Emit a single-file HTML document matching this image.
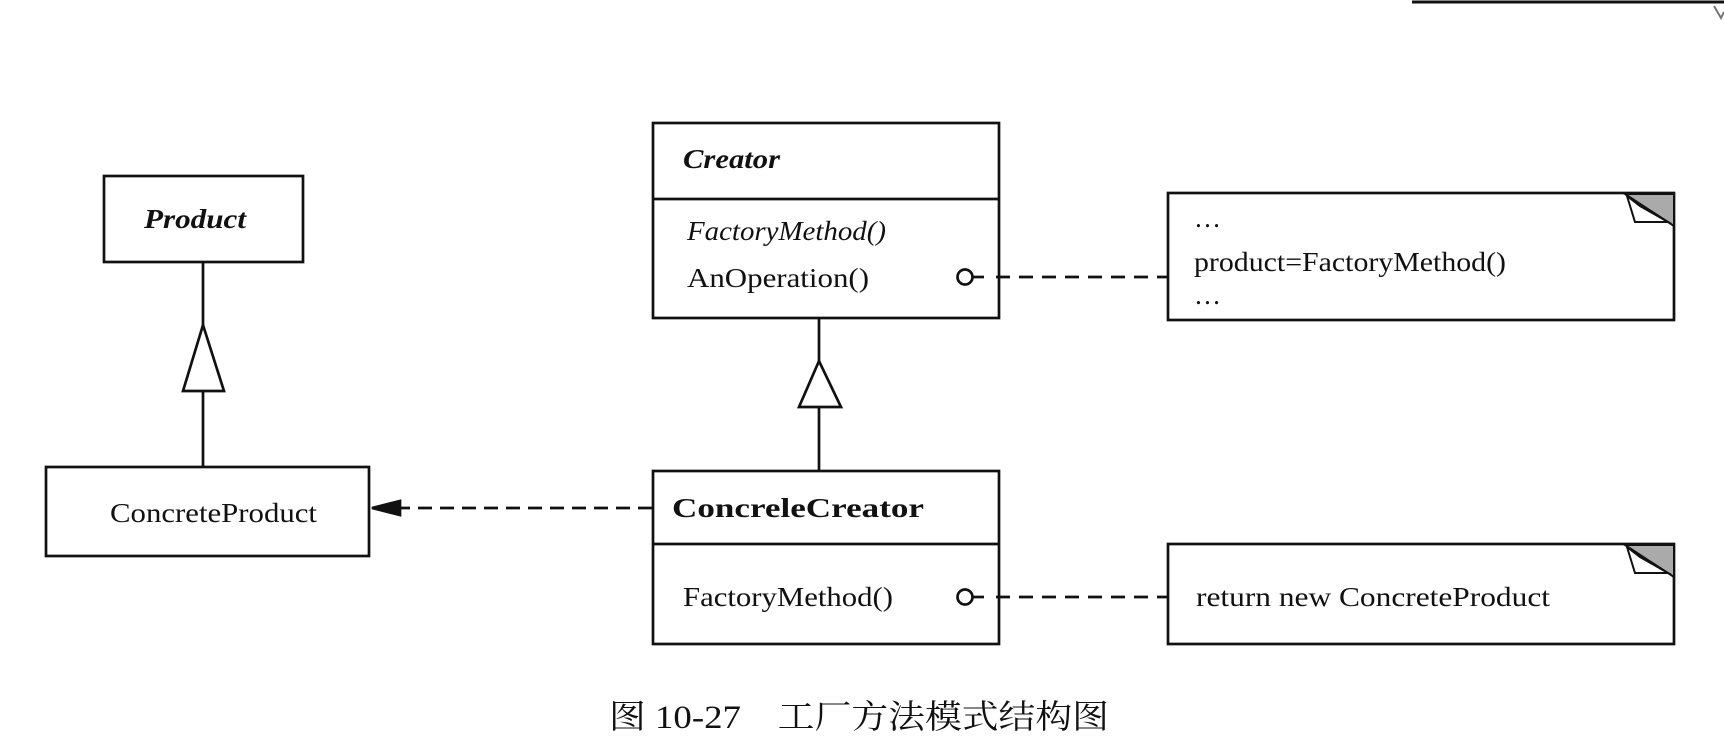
<!DOCTYPE html>
<html><head><meta charset="utf-8"><style>html,body{margin:0;padding:0;background:#fff;}svg{display:block}</style></head>
<body>
<svg width="1724" height="743" viewBox="0 0 1724 743" xmlns="http://www.w3.org/2000/svg" font-family="'Liberation Serif','Noto Serif CJK SC',serif" fill="#111">
<g stroke="#111" stroke-width="2.7" fill="none">
<line x1="1412" y1="2" x2="1724" y2="2" stroke-width="3"/>
<polyline points="1714,6 1721,18 1724,12" stroke="#777" stroke-width="2"/>
<rect x="104" y="176" width="199" height="86"/>
<line x1="203" y1="262" x2="203" y2="325"/>
<polygon points="203,325 183,391 224,391" fill="#fff"/>
<line x1="203" y1="391" x2="203" y2="467"/>
<rect x="46" y="467" width="323" height="89"/>
<line x1="652" y1="508" x2="395" y2="508" stroke-dasharray="14,8"/>
<polygon points="372,508 400,501 400,515" fill="#111"/>
<rect x="653" y="123" width="346" height="195"/>
<line x1="653" y1="199" x2="999" y2="199"/>
<circle cx="965" cy="277" r="7.5"/>
<line x1="973" y1="277" x2="984" y2="277"/>
<line x1="996" y1="277" x2="1168" y2="277" stroke-dasharray="14,9"/>
<line x1="819" y1="318" x2="819" y2="361"/>
<polygon points="819,361 799,407 841,407" fill="#fff"/>
<line x1="819" y1="407" x2="819" y2="471"/>
<rect x="653" y="471" width="346" height="173"/>
<line x1="653" y1="544" x2="999" y2="544"/>
<circle cx="965" cy="597" r="7.5"/>
<line x1="973" y1="597" x2="984" y2="597"/>
<line x1="996" y1="597" x2="1168" y2="597" stroke-dasharray="14,9"/>
<rect x="1168" y="193" width="506" height="127"/>
<rect x="1168" y="544" width="506" height="100"/>
</g>
<g stroke="#111" stroke-width="2">
<polygon points="1625,194 1674,194 1674,226" fill="#aaa"/>
<polygon points="1627,196 1635,222 1668,222 1640,206" fill="#fff"/>
<polygon points="1625,545 1674,545 1674,577" fill="#aaa"/>
<polygon points="1627,547 1635,573 1668,573 1640,557" fill="#fff"/>
</g>
<g font-size="27">
<text x="144" y="228" font-weight="bold" font-style="italic" textLength="102" lengthAdjust="spacingAndGlyphs">Product</text>
<text x="110" y="522" textLength="207" lengthAdjust="spacingAndGlyphs">ConcreteProduct</text>
<text x="683" y="168" font-weight="bold" font-style="italic" textLength="97" lengthAdjust="spacingAndGlyphs">Creator</text>
<text x="687" y="240" font-style="italic" textLength="199" lengthAdjust="spacingAndGlyphs">FactoryMethod()</text>
<text x="687" y="287" textLength="182" lengthAdjust="spacingAndGlyphs">AnOperation()</text>
<text x="672" y="517" font-weight="bold" textLength="252" lengthAdjust="spacingAndGlyphs">ConcreleCreator</text>
<text x="683" y="606" textLength="210" lengthAdjust="spacingAndGlyphs">FactoryMethod()</text>
<text x="1194" y="227">…</text>
<text x="1194" y="271" textLength="312" lengthAdjust="spacingAndGlyphs">product=FactoryMethod()</text>
<text x="1194" y="304">…</text>
<text x="1196" y="606" textLength="354" lengthAdjust="spacingAndGlyphs">return new ConcreteProduct</text>
</g>
<text x="609" y="728" font-size="33" textLength="500" lengthAdjust="spacingAndGlyphs">图 10-27　工厂方法模式结构图</text>
</svg>
</body></html>
